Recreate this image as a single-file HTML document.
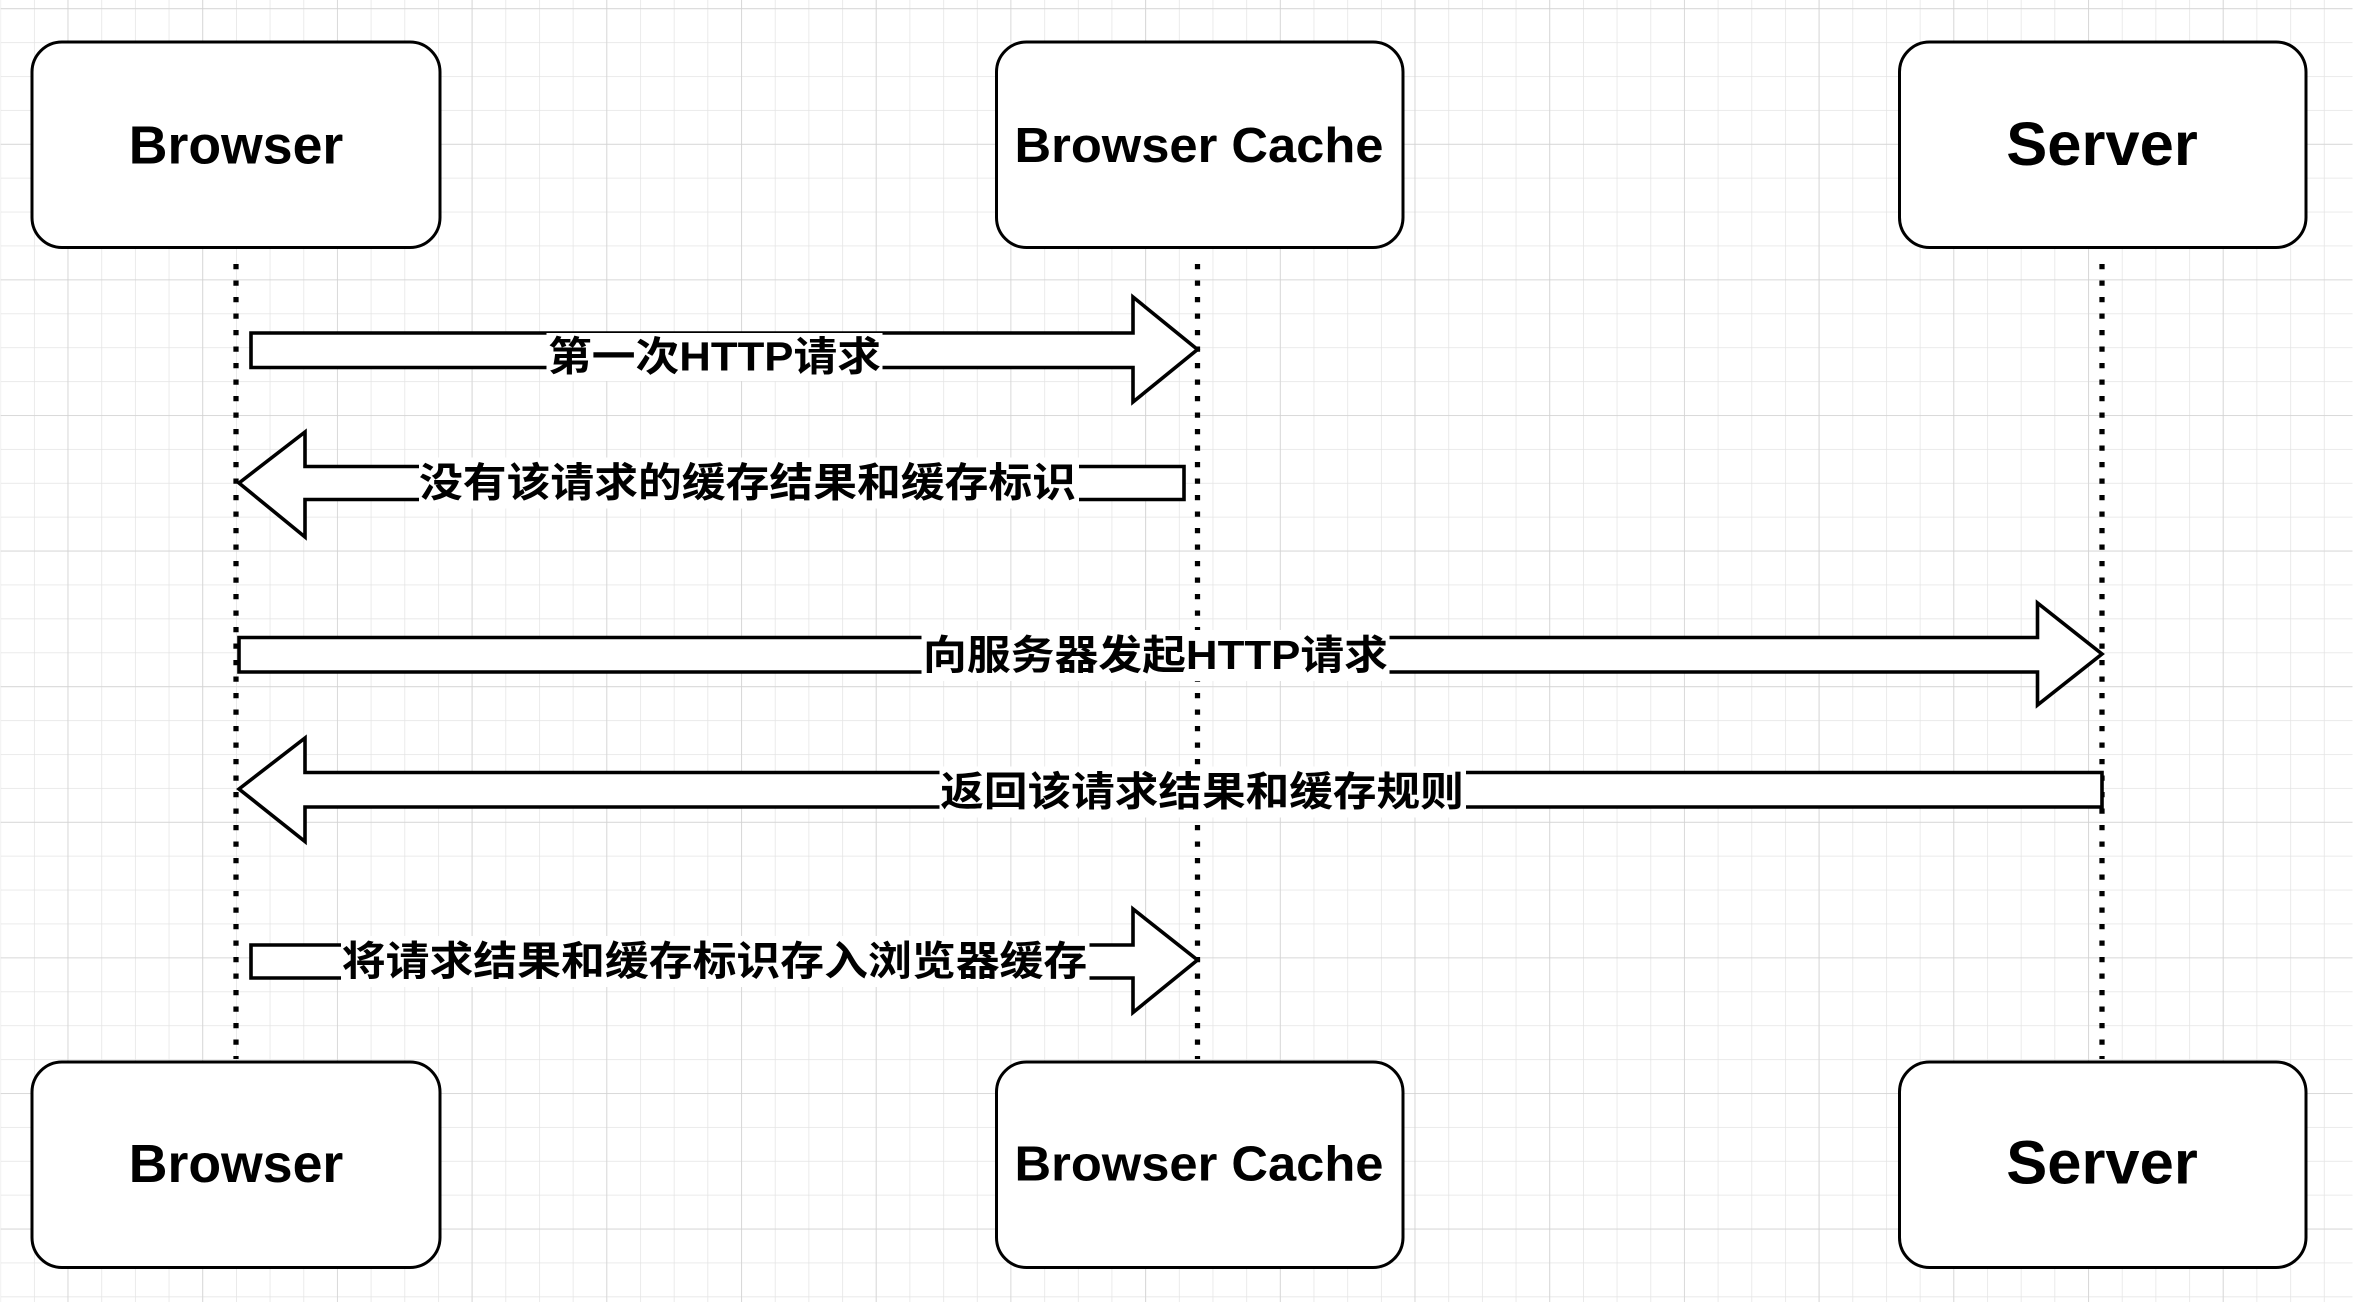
<!DOCTYPE html>
<html><head><meta charset="utf-8"><style>
html,body{margin:0;padding:0;background:#fff;}
svg{display:block;}
text{font-family:"Liberation Sans","Noto Sans CJK SC",sans-serif;font-weight:bold;fill:#000;}
</style></head><body>
<svg width="2353" height="1302" viewBox="0 0 1568 868" xmlns="http://www.w3.org/2000/svg">
<defs>
<pattern id="g" x="22.3" y="5.5" width="22.45" height="22.6" patternUnits="userSpaceOnUse">
<path d="M0 0V22.6M0 0H22.45" stroke="#e4e4e4" stroke-width="1" fill="none"/>
</pattern>
<pattern id="G" x="44.7" y="5.5" width="89.8" height="90.4" patternUnits="userSpaceOnUse">
<path d="M0 0V90.4M0 0H89.8" stroke="#d2d2d2" stroke-width="1" fill="none"/>
</pattern>
</defs>
<rect width="1568" height="868" fill="#fff"/>
<rect width="1568" height="868" fill="url(#g)"/>
<rect width="1568" height="868" fill="url(#G)"/>

<g stroke="#000" stroke-width="3.5" stroke-dasharray="3.5 7.5">
<line x1="157" y1="176" x2="157" y2="706"/>
<line x1="798" y1="176" x2="798" y2="706"/>
<line x1="1401" y1="176" x2="1401" y2="706"/>
</g>

<g fill="#fff" stroke="#000" stroke-width="2">
<rect x="21" y="28" width="272" height="137" rx="20"/>
<rect x="664" y="28" width="271" height="137" rx="20"/>
<rect x="1266" y="28" width="271" height="137" rx="20"/>
<rect x="21" y="708" width="272" height="137" rx="20"/>
<rect x="664" y="708" width="271" height="137" rx="20"/>
<rect x="1266" y="708" width="271" height="137" rx="20"/>
</g>
<g text-anchor="middle">
<text x="157" y="109" font-size="36" textLength="143" lengthAdjust="spacingAndGlyphs">Browser</text>
<text x="799" y="108" font-size="33" textLength="246" lengthAdjust="spacingAndGlyphs">Browser Cache</text>
<text x="1401" y="110" font-size="41">Server</text>
<text x="157" y="788" font-size="36" textLength="143" lengthAdjust="spacingAndGlyphs">Browser</text>
<text x="799" y="787" font-size="33" textLength="246" lengthAdjust="spacingAndGlyphs">Browser Cache</text>
<text x="1401" y="789" font-size="41">Server</text>
</g>

<g fill="#fff" stroke="#000" stroke-width="2.4" stroke-linejoin="miter">
<polygon points="167,222 755,222 755,198 798,233 755,268 755,245 167,245"/>
<polygon points="159,322 203,288 203,311 789,311 789,333 203,333 203,358"/>
<polygon points="159,425 1358,425 1358,402 1401,436 1358,470 1358,448 159,448"/>
<polygon points="159,526 203,492 203,515 1401,515 1401,538 203,538 203,561"/>
<polygon points="167,630 755,630 755,606 798,640 755,675 755,652 167,652"/>
</g>

<g fill="#fff">
<rect x="364" y="222" width="224" height="32"/>
<rect x="279" y="305" width="440" height="34"/>
<rect x="614" y="420" width="312" height="34"/>
<rect x="626" y="511" width="351" height="34"/>
<rect x="227" y="624" width="499" height="34"/>
</g>
<g text-anchor="middle" font-size="27">
<text x="476" y="247" textLength="222" lengthAdjust="spacingAndGlyphs">第一次HTTP请求</text>
<text x="498" y="331" textLength="438" lengthAdjust="spacingAndGlyphs">没有该请求的缓存结果和缓存标识</text>
<text x="770" y="446" textLength="310" lengthAdjust="spacingAndGlyphs">向服务器发起HTTP请求</text>
<text x="801" y="537" textLength="349" lengthAdjust="spacingAndGlyphs">返回该请求结果和缓存规则</text>
<text x="476" y="650" textLength="497" lengthAdjust="spacingAndGlyphs">将请求结果和缓存标识存入浏览器缓存</text>
</g>
</svg>
</body></html>
